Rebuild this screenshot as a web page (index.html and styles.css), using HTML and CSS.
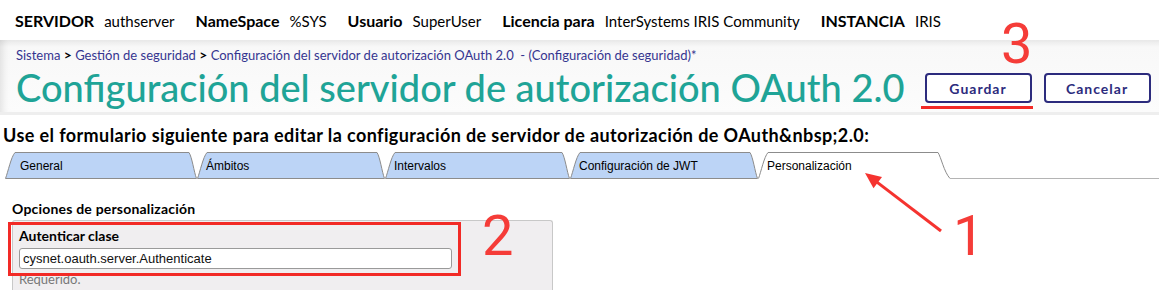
FILE: index.html
```html
<!DOCTYPE html>
<html lang="es">
<head>
  <meta charset="UTF-8" />
  <title>Configuración del servidor de autorización OAuth 2.0</title>
  <link rel="stylesheet" href="styles.css">
</head>
<body>
  <header class="topbar">
    <div class="info"><span class="lbl">SERVIDOR</span><span class="val">authserver</span></div>
    <div class="info"><span class="lbl">NameSpace</span><span class="val">%SYS</span></div>
    <div class="info"><span class="lbl">Usuario</span><span class="val">SuperUser</span></div>
    <div class="info"><span class="lbl">Licencia para</span><span class="val">InterSystems IRIS Community</span></div>
    <div class="info"><span class="lbl">INSTANCIA</span><span class="val">IRIS</span></div>
  </header>

  <section class="head">
    <div class="crumbs">
      <a href="#">Sistema</a> <b>&gt;</b> <a href="#">Gestión de seguridad</a> <b>&gt;</b>
      <a href="#">Configuración del servidor de autorización OAuth 2.0</a>&nbsp; - (Configuración de seguridad)*
    </div>
    <div class="title-row">
      <h1>Configuración del servidor de autorización OAuth 2.0</h1>
      <div class="actions">
        <button class="btn save">Guardar</button>
        <button class="btn">Cancelar</button>
      </div>
    </div>
  </section>

  <p class="intro">Use el formulario siguiente para editar la configuración de servidor de autorización de OAuth&amp;nbsp;2.0:</p>

  <nav class="tabs">
    <div class="tab first w1"><svg class="tab-shape" viewBox="0 0 192 27" preserveAspectRatio="none"><path d="M0.5 26.5 C3 20 6 5 10 0.5 L184 0.5 C187 5 189 20 191.5 26.5 Z"/></svg><span>General</span></div>
    <div class="tab w2"><svg class="tab-shape" viewBox="0 0 188 27" preserveAspectRatio="none"><path d="M0.5 26.5 C3 20 6 5 10 0.5 L180 0.5 C183 5 185 20 187.5 26.5 Z"/></svg><span>Ámbitos</span></div>
    <div class="tab w3"><svg class="tab-shape" viewBox="0 0 185 27" preserveAspectRatio="none"><path d="M0.5 26.5 C3 20 6 5 10 0.5 L177 0.5 C180 5 182 20 184.5 26.5 Z"/></svg><span>Intervalos</span></div>
    <div class="tab w4"><svg class="tab-shape" viewBox="0 0 188 27" preserveAspectRatio="none"><path d="M0.5 26.5 C3 20 6 5 10 0.5 L180 0.5 C183 5 185 20 187.5 26.5 Z"/></svg><span>Configuración de JWT</span></div>
    <div class="tab active w5"><svg class="tab-shape" viewBox="0 0 192 27" preserveAspectRatio="none"><path d="M0.5 26.5 C3 20 6 5 10 0.5 L180 0.5 C183 5 186 20 192 26.5"/></svg><span>Personalización</span></div>
    <div class="tab-rest"></div>
  </nav>

  <section class="options">
    <h3>Opciones de personalización</h3>
    <div class="box">
      <label class="field-lbl">Autenticar clase</label>
      <input class="field" type="text" value="cysnet.oauth.server.Authenticate">
      <div class="hint">Requerido.</div>
    </div>
  </section>

  <!-- annotations drawn over the screenshot -->
  <div class="mark n3">3</div>
  <div class="underline"></div>
  <div class="mark n2">2</div>
  <div class="mark n1">1</div>
  <div class="redbox"></div>
  <svg class="arrow" width="95" height="75" viewBox="0 0 95 75">
    <line x1="86" y1="68" x2="20" y2="17.6" stroke="#f5332f" stroke-width="3"/>
    <path d="M10 10 L18.5 25.3 L27 14.1 Z" fill="#f5332f"/>
  </svg>
</body>
</html>
```

FILE: styles.css
```css
body {
  margin: 0;
  width: 1159px;
  height: 290px;
  overflow: hidden;
  position: relative;
  font-family: "Lato", sans-serif;
  background: #fff;
  color: #000;
}

.topbar {
  display: flex;
  align-items: center;
  gap: 21px;
  height: 40px;
  padding-left: 15px;
}
.topbar .lbl { font-weight: bold; margin-right: 10px; font-size: 16px; }
.topbar .val { font-size: 15px; }

.head {
  background: linear-gradient(#e9e9e9, #f8f8f8 7px, #fcfcfc);
  box-shadow: inset 8px 0 8px -6px rgba(0,0,0,.12);
  border-bottom: 3px solid #eeeeee;
  padding: 5px 0 0 16px;
  height: 67px;
}

.crumbs {
  font-size: 13px;
  color: #353590;
  height: 20px;
  line-height: 20px;
}
.crumbs a { color: #353590; text-decoration: none; }
.crumbs b { color: #000; font-size: 14px; }

.title-row {
  display: flex;
  align-items: center;
  gap: 20px;
}
h1 {
  margin: 0;
  font-size: 38px;
  font-weight: 500;
  color: #1fa497;
  line-height: 44px;
}
.actions { display: flex; gap: 12px; margin-top: 2px; }
.btn {
  width: 107px;
  height: 30px;
  border: 2px solid #2c2b7d;
  border-radius: 4px;
  background: #fff;
  color: #2c2b7d;
  font-family: "Lato", sans-serif;
  font-weight: bold;
  font-size: 14px;
  letter-spacing: 1px;
}

.intro {
  margin: 10px 0 0 3px;
  font-size: 18px;
  font-weight: bold;
  letter-spacing: 0.4px;
  line-height: 20px;
}

.tabs {
  display: flex;
  margin: 7px 0 0 5px;
  height: 27px;
  font-family: "Liberation Sans", Arial, sans-serif;
  font-size: 12px;
}
.tab {
  position: relative;
  display: flex;
  align-items: center;
  box-sizing: border-box;
  padding-left: 9px;
}
.tab.first { padding-left: 15px; }
.tab span { position: relative; }
.tab-shape {
  position: absolute;
  left: 0;
  top: 0;
  width: 100%;
  height: 100%;
}
.tab-shape path {
  fill: #bcd4f6;
  stroke: #8c8c8c;
  stroke-width: 1;
  vector-effect: non-scaling-stroke;
}
.tab.active .tab-shape path { fill: #fff; }
.w1 { width: 192px; }
.w2 { width: 188px; }
.w3 { width: 185px; }
.w4 { width: 188px; }
.w5 { width: 192px; }
.tab-rest { flex: 1; border-bottom: 1px solid #b4b4b4; }

.options { padding: 21px 0 0 12px; }
.options h3 {
  margin: 0 0 3px;
  font-size: 14px;
  letter-spacing: 0.2px;
  line-height: 17px;
  font-weight: bold;
}
.box {
  width: 541px;
  height: 70px;
  background: #f0eef0;
  border: 1px solid #c8c8c8;
  border-bottom: none;
  border-radius: 3px 3px 0 0;
  padding: 6px 0 0 6px;
  box-sizing: border-box;
}
.field-lbl { display: block; font-size: 14px; line-height: 17px; font-weight: bold; margin-bottom: 4px; }
.field {
  display: block;
  width: 433px;
  height: 21px;
  box-sizing: border-box;
  border: 1px solid #9a9a9a;
  border-radius: 3px;
  padding: 0 3px;
  font-family: "Liberation Sans", Arial, sans-serif;
  font-size: 13px;
  color: #111;
}
.hint { font-size: 13px; line-height: 15px; color: #777; margin-top: 3px; }

.mark {
  position: absolute;
  font-family: "Roboto", sans-serif;
  font-size: 56px;
  line-height: 1;
  color: #f53c38;
}
.n3 { left: 1001px; top: 16px; }
.n2 { left: 482px; top: 208px; }
.n1 { left: 953px; top: 208px; }
.underline {
  position: absolute;
  left: 921px;
  top: 106px;
  width: 112px;
  height: 3px;
  background: #f22a26;
}
.redbox {
  position: absolute;
  left: 8px;
  top: 222px;
  width: 447px;
  height: 48px;
  border: 3px solid #f22a26;
}
.arrow {
  position: absolute;
  left: 855px;
  top: 163px;
}
```
